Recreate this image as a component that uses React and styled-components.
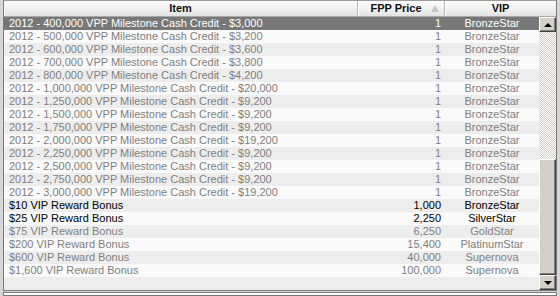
import React from 'react';
import styled, { createGlobalStyle } from 'styled-components';

const GlobalStyle = createGlobalStyle`
  html, body {
    margin: 0;
    padding: 0;
    background: #d6d6d6;
  }
  body {
    font-family: "Liberation Sans", Arial, sans-serif;
    font-size: 11px;
  }
`;

const milestone = (vpp, cash) => `2012 - ${vpp} VPP Milestone Cash Credit - $${cash}`;

const rows = [
  { item: milestone('400,000', '3,000'), price: '1', vip: 'BronzeStar' },
  { item: milestone('500,000', '3,200'), price: '1', vip: 'BronzeStar' },
  { item: milestone('600,000', '3,600'), price: '1', vip: 'BronzeStar' },
  { item: milestone('700,000', '3,800'), price: '1', vip: 'BronzeStar' },
  { item: milestone('800,000', '4,200'), price: '1', vip: 'BronzeStar' },
  { item: milestone('1,000,000', '20,000'), price: '1', vip: 'BronzeStar' },
  { item: milestone('1,250,000', '9,200'), price: '1', vip: 'BronzeStar' },
  { item: milestone('1,500,000', '9,200'), price: '1', vip: 'BronzeStar' },
  { item: milestone('1,750,000', '9,200'), price: '1', vip: 'BronzeStar' },
  { item: milestone('2,000,000', '19,200'), price: '1', vip: 'BronzeStar' },
  { item: milestone('2,250,000', '9,200'), price: '1', vip: 'BronzeStar' },
  { item: milestone('2,500,000', '9,200'), price: '1', vip: 'BronzeStar' },
  { item: milestone('2,750,000', '9,200'), price: '1', vip: 'BronzeStar' },
  { item: milestone('3,000,000', '19,200'), price: '1', vip: 'BronzeStar' },
  { item: '$10 VIP Reward Bonus', price: '1,000', vip: 'BronzeStar', active: true },
  { item: '$25 VIP Reward Bonus', price: '2,250', vip: 'SilverStar', active: true },
  { item: '$75 VIP Reward Bonus', price: '6,250', vip: 'GoldStar' },
  { item: '$200 VIP Reward Bonus', price: '15,400', vip: 'PlatinumStar' },
  { item: '$600 VIP Reward Bonus', price: '40,000', vip: 'Supernova' },
  { item: '$1,600 VIP Reward Bonus', price: '100,000', vip: 'Supernova' },
  { item: '', price: '', vip: '' },
];

const App = () => {
  return (
    <>
      <GlobalStyle />
      <Page>
        <ListBox>
          <Header>
            <HeadCell $w={354}>Item</HeadCell>
            <HeadCell $w={87} $pr={10}>
              FPP Price
              <SortArrow />
            </HeadCell>
            <HeadCell $grow>VIP</HeadCell>
          </Header>
          <Body>
            <Rows>
              {rows.map((r, i) => (
                <Row key={i} $selected={i === 0} $odd={i % 2 === 0} $active={r.active}>
                  <ItemCell>{r.item}</ItemCell>
                  <PriceCell>{r.price}</PriceCell>
                  <VipCell>{r.vip}</VipCell>
                </Row>
              ))}
            </Rows>
            <ScrollBar>
              <ScrollButton>
                <Arrow $up />
              </ScrollButton>
              <Track />
              <Thumb />
              <ScrollButton>
                <Arrow />
              </ScrollButton>
            </ScrollBar>
          </Body>
        </ListBox>
        <InputBox />
      </Page>
    </>
  );
};

const Page = styled.div`
  width: 560px;
  height: 296px;
  overflow: hidden;
  display: flex;
  flex-direction: column;
  gap: 1px;
  padding: 0 3px;
  box-sizing: border-box;
`;

const ListBox = styled.div`
  border: 1px solid #7a7a7a;
  border-top-color: #9a9a9a;
  background: #fff;
  display: flex;
  flex-direction: column;
`;

const Header = styled.div`
  display: flex;
  height: 15px;
  border-bottom: 1px solid #a8a8a8;
  background: linear-gradient(#fbfbfb, #f2f2f2 50%, #e2e2e2);
`;

const HeadCell = styled.div`
  position: relative;
  width: ${(p) => (p.$w ? `${p.$w}px` : 'auto')};
  flex: ${(p) => (p.$grow ? 1 : 'none')};
  padding-right: ${(p) => (p.$pr ? `${p.$pr}px` : 0)};
  box-sizing: border-box;
  display: flex;
  align-items: center;
  justify-content: center;
  font-weight: bold;
  color: #111;
  line-height: 15px;
  border-right: 1px solid #b8b8b8;
  box-shadow: inset 1px 0 0 #fff;

  &:last-child {
    border-right: none;
  }
`;

const SortArrow = styled.span`
  position: absolute;
  right: 5px;
  top: 4px;
  width: 0;
  height: 0;
  border-left: 4px solid transparent;
  border-right: 4px solid transparent;
  border-bottom: 7px solid #c6c6c6;
`;

const Body = styled.div`
  display: flex;
`;

const Rows = styled.div`
  width: 535px;
  display: flex;
  flex-direction: column;
`;

const Row = styled.div`
  display: flex;
  height: 13px;
  line-height: 13px;
  background: ${(p) => (p.$selected ? '#787878' : p.$odd ? '#ededed' : '#fafafa')};
  color: ${(p) => (p.$selected ? '#fff' : p.$active ? '#000' : '#7f7f7f')};
  white-space: nowrap;
`;

const ItemCell = styled.div`
  width: 354px;
  padding-left: 5px;
  box-sizing: border-box;
  overflow: hidden;
`;

const PriceCell = styled.div`
  width: 87px;
  padding-right: 4px;
  box-sizing: border-box;
  text-align: right;
`;

const VipCell = styled.div`
  flex: 1;
  text-align: center;
`;

const ScrollBar = styled.div`
  width: 17px;
  display: flex;
  flex-direction: column;
  background: #d4d0c8;
`;

const ScrollButton = styled.div`
  height: 15px;
  box-sizing: border-box;
  background: #d4d0c8;
  border-top: 1px solid #fff;
  border-left: 1px solid #fff;
  border-right: 1px solid #404040;
  border-bottom: 1px solid #404040;
  box-shadow: inset -1px -1px 0 #808080;
  display: flex;
  align-items: center;
  justify-content: center;
`;

const Arrow = styled.span`
  width: 0;
  height: 0;
  border-left: 4px solid transparent;
  border-right: 4px solid transparent;
  ${(p) => (p.$up ? 'border-bottom: 4px solid #000;' : 'border-top: 4px solid #000;')}
`;

const Track = styled.div`
  height: 127px;
  background: repeating-conic-gradient(#ffffff 0 25%, #d4d0c8 0 50%) 0 0 / 2px 2px;
`;

const Thumb = styled.div`
  flex: 1;
  box-sizing: border-box;
  background: #d4d0c8;
  border-top: 1px solid #fff;
  border-left: 1px solid #fff;
  border-right: 1px solid #404040;
  border-bottom: 1px solid #404040;
  box-shadow: inset -1px -1px 0 #808080;
`;

const InputBox = styled.div`
  flex: 1;
  background: #fff;
  border: 1px solid #7a7a7a;
`;

export default App;
